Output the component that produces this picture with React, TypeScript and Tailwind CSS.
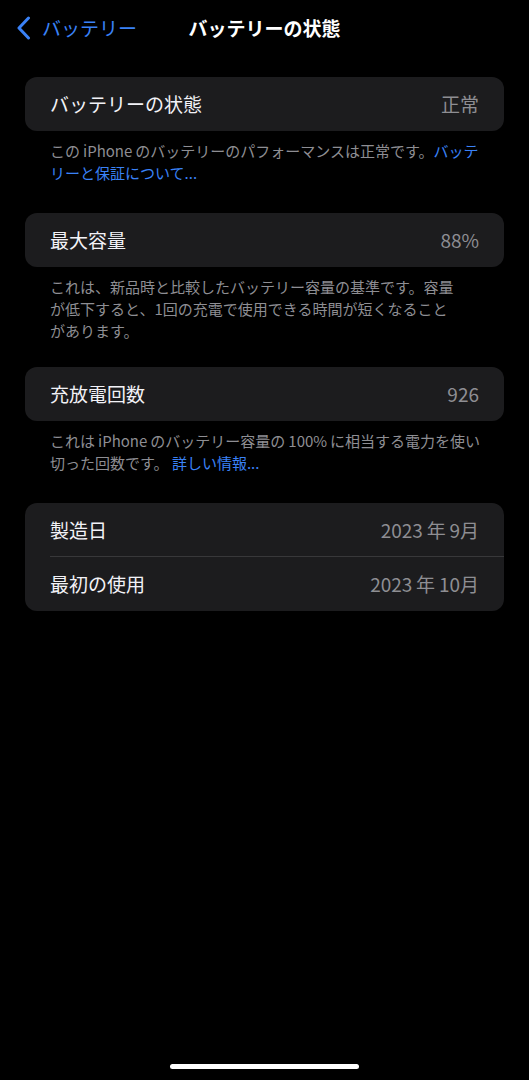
import type { ReactNode } from 'react';

const font = "font-['Noto_Sans_CJK_JP','Noto_Sans',sans-serif]";

function BackChevron() {
  return (
    <svg width="16" height="24" viewBox="0 0 16 24" fill="none" aria-hidden>
      <path
        d="M12.5 2 L3 12 L12.5 22"
        stroke="#3a82f7"
        strokeWidth="3"
        strokeLinecap="round"
        strokeLinejoin="round"
      />
    </svg>
  );
}

function Row({ label, value, divider }: { label: string; value: string; divider?: boolean }) {
  return (
    <div className="relative flex h-[54px] items-center justify-between pl-[25px] pr-[25px]">
      <span className="text-[19px] text-[#f2f2f7]">{label}</span>
      <span className="text-[19px] text-[#8e8e93]">{value}</span>
      {divider && <div className="absolute bottom-0 left-[25px] right-0 h-px bg-[#38383a]" />}
    </div>
  );
}

function Card({ children }: { children: ReactNode }) {
  return <div className="overflow-hidden rounded-[12px] bg-[#1c1c1e]">{children}</div>;
}

// each footer line is laid out on its own so the breaks stay where they are
function Footer({ lines }: { lines: ReactNode[] }) {
  return (
    <div className="px-[25px] pt-[9px] text-[15px] leading-[22px] text-[#8e8e93]">
      {lines.map((line, i) => (
        <div key={i} className="whitespace-nowrap">
          {line}
        </div>
      ))}
    </div>
  );
}

function Link({ children }: { children: ReactNode }) {
  return <span className="text-[#3a82f7]">{children}</span>;
}

export default function App() {
  return (
    <div className={`${font} flex h-[1080px] flex-col bg-black`}>
      {/* navigation bar */}
      <header className="grid h-[56px] grid-cols-[1fr_auto_1fr] items-center">
        <div className="flex items-center gap-[10px] pl-[16px]">
          <BackChevron />
          <span className="text-[19px] text-[#3a82f7]">バッテリー</span>
        </div>
        <h1 className="text-[19px] font-bold text-white">バッテリーの状態</h1>
        <div />
      </header>

      <main className="mt-[21px] px-[25px]">
        <section className="mb-[29px]">
          <Card>
            <Row label="バッテリーの状態" value="正常" />
          </Card>
          <Footer
            lines={[
              <>
                この{'\u2009'}iPhone{'\u2009'}のバッテリーのパフォーマンスは正常です。<Link>バッテ</Link>
              </>,
              <Link>リーと保証について...</Link>,
            ]}
          />
        </section>

        <section className="mb-[25px]">
          <Card>
            <Row label="最大容量" value="88%" />
          </Card>
          <Footer
            lines={[
              'これは、新品時と比較したバッテリー容量の基準です。容量',
              'が低下すると、1回の充電で使用できる時間が短くなること',
              'があります。',
            ]}
          />
        </section>

        <section className="mb-[29px]">
          <Card>
            <Row label="充放電回数" value="926" />
          </Card>
          <Footer
            lines={[
              <>
                これは{'\u2009'}iPhone{'\u2009'}のバッテリー容量の{'\u2009'}100%{'\u2009'}に相当する電力を使い
              </>,
              <>
                切った回数です。 <Link>詳しい情報...</Link>
              </>,
            ]}
          />
        </section>

        <section>
          <Card>
            <Row label="製造日" value={'2023\u2009年\u20099月'} divider />
            <Row label="最初の使用" value={'2023\u2009年\u200910月'} />
          </Card>
        </section>
      </main>

      {/* home indicator */}
      <div className="mt-auto flex justify-center pb-[11px]">
        <div className="h-[5px] w-[189px] rounded-full bg-white" />
      </div>
    </div>
  );
}
